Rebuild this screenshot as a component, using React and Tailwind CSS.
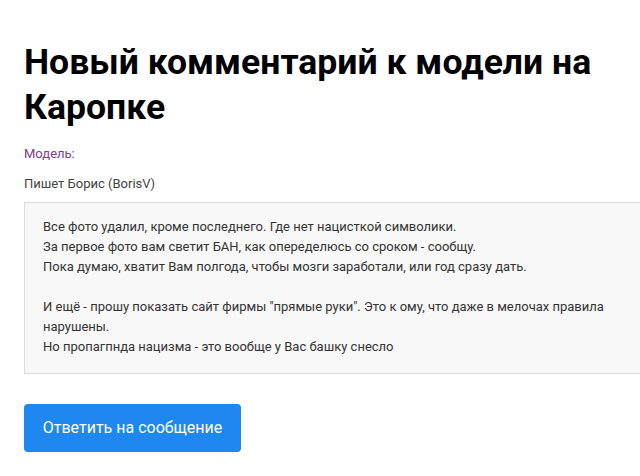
export default function App() {
  return (
    <div className="w-[640px] h-[476px] overflow-hidden bg-white" style={{ fontFamily: "Roboto, 'Noto Sans', sans-serif" }}>
      <div className="pl-6 pt-[40px]">
        <h1 className="text-[35.6px] leading-[45px] font-bold text-black pr-4">Новый комментарий к модели на Каропке</h1>
        <div className="mt-[14px] text-[13px] leading-[20px] text-[#7d3c8c]">Модель:</div>
        <div className="mt-[10px] text-[13px] leading-[20px] text-[#444]">Пишет Борис (BorisV)</div>
        <div className="mt-[8px] w-[640px] h-[172px] border border-[#dcdcdc] bg-[#f8f8f8] pl-[18px] pt-[14px] text-[13px] leading-[20px] text-[#333]">
          <p>Все фото удалил, кроме последнего. Где нет нацисткой символики.</p>
          <p>За первое фото вам светит БАН, как опеределюсь со сроком - сообщу.</p>
          <p>Пока думаю, хватит Вам полгода, чтобы мозги заработали, или год сразу дать.</p>
          <p>&nbsp;</p>
          <p>И ещё - прошу показать сайт фирмы "прямые руки". Это к ому, что даже в мелочах правила</p>
          <p>нарушены.</p>
          <p>Но пропагпнда нацизма - это вообще у Вас башку снесло</p>
        </div>
        <button className="mt-[30px] h-[48px] w-[217px] rounded-[4px] bg-[#1e88f0] text-white text-[16px]">Ответить на сообщение</button>
      </div>
    </div>
  );
}
